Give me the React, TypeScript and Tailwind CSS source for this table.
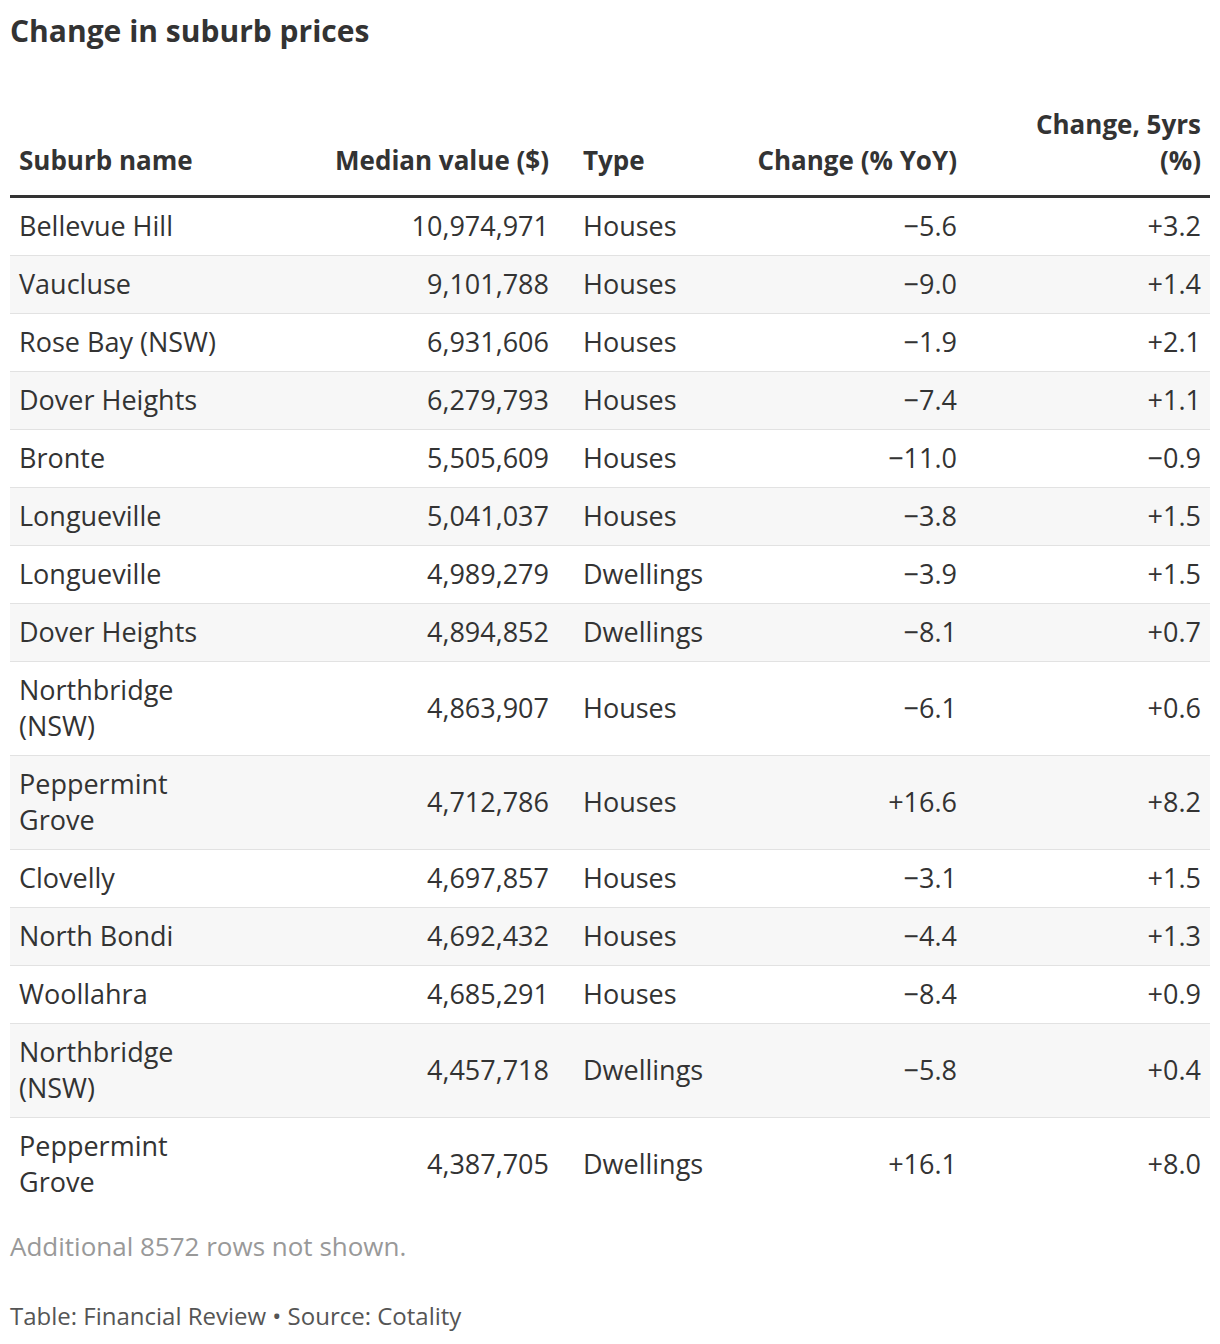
type Row = [string, string, string, string, string];

const rows: Row[] = [
  ["Bellevue Hill", "10,974,971", "Houses", "−5.6", "+3.2"],
  ["Vaucluse", "9,101,788", "Houses", "−9.0", "+1.4"],
  ["Rose Bay (NSW)", "6,931,606", "Houses", "−1.9", "+2.1"],
  ["Dover Heights", "6,279,793", "Houses", "−7.4", "+1.1"],
  ["Bronte", "5,505,609", "Houses", "−11.0", "−0.9"],
  ["Longueville", "5,041,037", "Houses", "−3.8", "+1.5"],
  ["Longueville", "4,989,279", "Dwellings", "−3.9", "+1.5"],
  ["Dover Heights", "4,894,852", "Dwellings", "−8.1", "+0.7"],
  ["Northbridge (NSW)", "4,863,907", "Houses", "−6.1", "+0.6"],
  ["Peppermint Grove", "4,712,786", "Houses", "+16.6", "+8.2"],
  ["Clovelly", "4,697,857", "Houses", "−3.1", "+1.5"],
  ["North Bondi", "4,692,432", "Houses", "−4.4", "+1.3"],
  ["Woollahra", "4,685,291", "Houses", "−8.4", "+0.9"],
  ["Northbridge (NSW)", "4,457,718", "Dwellings", "−5.8", "+0.4"],
  ["Peppermint Grove", "4,387,705", "Dwellings", "+16.1", "+8.0"],
];

export default function App() {
  return (
    <div
      className="bg-white text-[#333] px-[10px] pt-[13px] w-[1220px]"
      style={{ fontFamily: "'Open Sans', 'Liberation Sans', sans-serif" }}
    >
      <h1 className="text-[30px] leading-[36px] font-bold text-[#333]">
        Change in suburb prices
      </h1>

      <table className="w-full table-fixed border-collapse mt-[57px] text-[27px] leading-[36px]">
        <colgroup>
          <col className="w-[230px]" />
          <col className="w-[334px]" />
          <col className="w-[170px]" />
          <col className="w-[222px]" />
          <col />
        </colgroup>
        <thead>
          <tr className="border-b-[3px] border-[#333] align-bottom font-bold text-[26px]">
            <th className="text-left px-[9px] pb-[17px] whitespace-nowrap">Suburb name</th>
            <th className="text-right pl-[9px] pr-[25px] pb-[17px] whitespace-nowrap">
              Median value ($)
            </th>
            <th className="text-left px-[9px] pb-[17px]">Type</th>
            <th className="text-right px-[9px] pb-[17px] whitespace-nowrap">Change (% YoY)</th>
            <th className="text-right px-[9px] pb-[17px]">
              <div className="ml-auto max-w-[180px]">Change, 5yrs (%)</div>
            </th>
          </tr>
        </thead>
        <tbody>
          {rows.map((r, i) => (
            <tr
              key={i}
              className={`${i % 2 === 1 ? "bg-[#f7f7f7]" : "bg-white"} ${
                i < rows.length - 1 ? "border-b border-[#e2e2e2]" : ""
              }`}
            >
              <td className="px-[9px] pt-[10px] pb-[11px] align-middle">{r[0]}</td>
              <td className="pl-[9px] pr-[25px] pt-[10px] pb-[11px] text-right tabular-nums">
                {r[1]}
              </td>
              <td className="px-[9px] pt-[10px] pb-[11px]">{r[2]}</td>
              <td className="px-[9px] pt-[10px] pb-[11px] text-right tabular-nums">{r[3]}</td>
              <td className="px-[9px] pt-[10px] pb-[11px] text-right tabular-nums">{r[4]}</td>
            </tr>
          ))}
        </tbody>
      </table>

      <p className="mt-[17px] text-[26px] leading-[36px] text-[#999]">
        Additional 8572 rows not shown.
      </p>
      <p className="mt-[34px] pb-[8px] text-[24px] leading-[36px] text-[#555]">
        Table: Financial Review • Source: Cotality
      </p>
    </div>
  );
}
